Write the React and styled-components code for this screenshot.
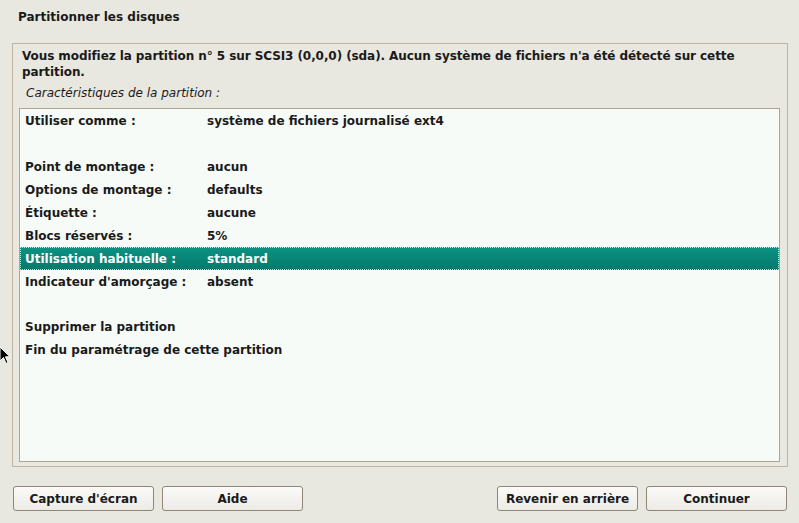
import React from 'react';
import styled, { createGlobalStyle } from 'styled-components';

const GlobalStyle = createGlobalStyle`
  html, body {
    margin: 0;
    padding: 0;
    background: #e8e7e0;
  }
  body {
    font-family: "DejaVu Sans", "Liberation Sans", sans-serif;
    color: #1a1a1a;
  }
`

const Page = styled.div`
  position: relative;
  width: 799px;
  height: 523px;
  display: flex;
  flex-direction: column;
  background: #e8e7e0;
`

const Title = styled.div`
  height: 43px;
  padding: 10px 0 0 18px;
  box-sizing: border-box;
  font-size: 12px;
  font-weight: bold;
`

const Frame = styled.div`
  margin: 0 11px 0 12px;
  height: 424px;
  box-sizing: border-box;
  border: 1px solid #bdb5a8;
  padding: 4px 7px 4px 6px;
  display: flex;
  flex-direction: column;
`

const Intro = styled.div`
  padding: 0 0 0 3px;
  font-size: 12px;
  font-weight: bold;
  line-height: 16px;
  letter-spacing: -0.08px;
`

const Caption = styled.div`
  padding: 6px 0 0 7px;
  height: 21px;
  box-sizing: border-box;
  font-size: 12px;
  font-style: italic;
  line-height: 15px;
`

const List = styled.div`
  margin-top: 7px;
  flex: 1;
  border: 1px solid #aca596;
  background: #f6fbf8;
  display: flex;
  flex-direction: column;
`

const Row = styled.div`
  display: flex;
  align-items: center;
  height: ${p => p.$h || 23}px;
  box-sizing: border-box;
  padding-left: 5px;
  font-size: 12px;
  font-weight: bold;
  color: ${p => (p.$selected ? '#ffffff' : '#1a1a1a')};
  background: ${p => (p.$selected ? 'linear-gradient(#0d9283, #04796b)' : 'transparent')};
  outline: ${p => (p.$selected ? '1px dotted #bfe8e2' : 'none')};
  outline-offset: -1px;
`

const Label = styled.span`
  width: 182px;
  flex-shrink: 0;
`

const ButtonBar = styled.div`
  display: flex;
  align-items: center;
  justify-content: space-between;
  padding: 19px 12px 0 13px;
`

const ButtonGroup = styled.div`
  display: flex;
  gap: 8px;
`

const Button = styled.button`
  width: 141px;
  height: 25px;
  box-sizing: border-box;
  border: 1px solid #8e8778;
  border-radius: 3px;
  background: linear-gradient(#fbfaf8, #ecebe6);
  font-family: "DejaVu Sans", "Liberation Sans", sans-serif;
  font-size: 12px;
  font-weight: bold;
  color: #1a1a1a;
  padding: 0;
`

const Cursor = styled.svg`
  position: absolute;
  left: -1px;
  top: 346px;
`

const rows = [
  { label: 'Utiliser comme :', value: 'système de fichiers journalisé ext4' },
  { blank: 23 },
  { label: 'Point de montage :', value: 'aucun' },
  { label: 'Options de montage :', value: 'defaults' },
  { label: 'Étiquette :', value: 'aucune' },
  { label: 'Blocs réservés :', value: '5%' },
  { label: 'Utilisation habituelle :', value: 'standard', selected: true },
  { label: "Indicateur d'amorçage :", value: 'absent' },
  { blank: 22 },
  { label: 'Supprimer la partition' },
  { label: 'Fin du paramétrage de cette partition' },
];

const App = () => {
  return (
    <Page>
      <GlobalStyle />
      <Title>Partitionner les disques</Title>
      <Frame>
        <Intro>
          Vous modifiez la partition n° 5 sur SCSI3 (0,0,0) (sda). Aucun système de fichiers n'a été détecté sur cette partition.
        </Intro>
        <Caption>Caractéristiques de la partition :</Caption>
        <List>
          {rows.map((r, i) =>
            r.blank ? (
              <Row key={i} $h={r.blank} />
            ) : (
              <Row key={i} $selected={r.selected}>
                {r.value !== undefined ? (
                  <>
                    <Label>{r.label}</Label>
                    <span>{r.value}</span>
                  </>
                ) : (
                  r.label
                )}
              </Row>
            )
          )}
        </List>
      </Frame>
      <ButtonBar>
        <ButtonGroup>
          <Button>Capture d'écran</Button>
          <Button>Aide</Button>
        </ButtonGroup>
        <ButtonGroup>
          <Button>Revenir en arrière</Button>
          <Button>Continuer</Button>
        </ButtonGroup>
      </ButtonBar>
      <Cursor width="12" height="20" viewBox="0 0 12 20">
        <path d="M1 1 L1 15 L4.5 11.5 L7 17.5 L9 16.5 L6.5 10.8 L11 10.8 Z" fill="#000" stroke="#fff" strokeWidth="1" />
      </Cursor>
    </Page>
  );
};

export default App;
